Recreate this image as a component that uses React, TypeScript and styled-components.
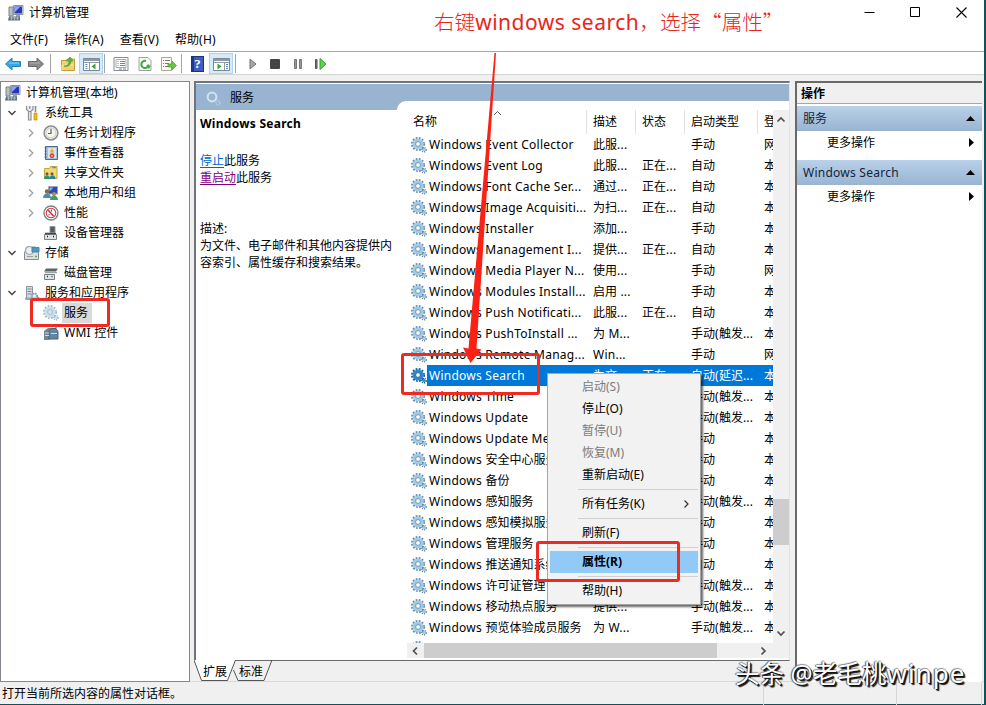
import React from 'react';
import styled, { createGlobalStyle, css } from 'styled-components';

const GlobalStyle = createGlobalStyle`
  * { box-sizing: border-box; }
  body {
    margin: 0;
    background: #fff;
    color: #000;
    font-family: "Noto Sans", "Noto Sans CJK SC", sans-serif;
    font-size: 12px;
    line-height: 20px;
    overflow: hidden;
  }
  svg { display: block; flex: none; }
`;

/* ---------- text ---------- */
const Latin = styled.span`
  letter-spacing: 0.25px;
`;
const T = ({ children }: { children: string }) => (
  <>
    {children.split(/([\x20-\x7e]+)/).map((part, i) =>
      /^[\x20-\x7e]+$/.test(part) ? <Latin key={i}>{part}</Latin> : part,
    )}
  </>
);

/* ---------- window frame ---------- */
const Desktop = styled.div`
  position: relative;
  width: 986px;
  height: 705px;
  overflow: hidden;
  background: #164f5b;
  padding: 0 2px 1px 0;
`;
const Window = styled.div`
  display: flex;
  flex-direction: column;
  height: 704px;
  background: #f0f0f0;
`;
const TitleBar = styled.div`
  display: flex;
  align-items: center;
  height: 28px;
  padding: 0 17px 3px 8px;
  background: #fff;
`;
const TitleText = styled.div`
  flex: 1;
  padding-left: 5px;
`;
const WindowButtons = styled.div`
  display: flex;
  gap: 35px;
`;
const MenuBar = styled.div`
  display: flex;
  gap: 16px;
  height: 24px;
  padding: 2px 0 0 10px;
  background: #fff;
  border-bottom: 1px solid #a6a6a6;
`;
const ToolBar = styled.div`
  display: flex;
  align-items: center;
  height: 23px;
  padding: 1px 0 0 1px;
  background: #fff;
  border-bottom: 1px solid #d5d5d5;
`;
const ToolButton = styled.div<{ $active?: boolean; $w?: number }>`
  display: flex;
  align-items: center;
  justify-content: center;
  width: ${(p) => p.$w ?? 23}px;
  height: 21px;
  ${(p) =>
    p.$active &&
    css`
      background: #d5eafb;
      border: 1px solid #a9d5f7;
    `}
`;
const ToolDivider = styled.div<{ $l?: number; $r?: number }>`
  width: 1px;
  height: 19px;
  margin: 0 ${(p) => p.$r ?? 2}px 0 ${(p) => p.$l ?? 2}px;
  background: #a0a5ac;
`;

const Workspace = styled.div`
  display: grid;
  grid-template-columns: 190px 596px 188px;
  column-gap: 4px;
  height: 607px;
  padding-top: 6px;
  border-bottom: 1px solid #d9d9d9;
`;

/* ---------- tree ---------- */
const TreePane = styled.div`
  height: 601px;
  padding-top: 1px;
  background: #fff;
  border: 1px solid #828790;
`;
const TreeRow = styled.div<{ $level: number }>`
  display: flex;
  align-items: center;
  height: 20px;
  padding-left: ${(p) => [4, 6, 26][p.$level]}px;
`;
const Chevron = styled.div<{ $level: number }>`
  width: ${(p) => [0, 17, 16][p.$level]}px;
`;
const TreeLabel = styled.div<{ $selected?: boolean }>`
  height: 20px;
  margin-left: 3px;
  padding: 0 2px;
  white-space: nowrap;
  ${(p) =>
    p.$selected &&
    css`
      padding-right: 4px;
      background: #d9d9d9;
    `}
`;

/* ---------- centre ---------- */
const CentrePane = styled.div`
  display: flex;
  flex-direction: column;
  height: 601px;
`;
const CentreBody = styled.div`
  height: 580px;
  padding-top: 1px;
  background: #fff;
  border: 1px solid #70747b;
  border-left-width: 2px;
  border-top-width: 2px;
  border-right-color: #e3e3e3;
  border-bottom-color: #696969;
`;
const CentreHeader = styled.div`
  display: flex;
  align-items: center;
  height: 26px;
  padding: 1px 0 0 9px;
  gap: 9px;
  background: #99b4d1;
`;
const CentreSplit = styled.div`
  display: flex;
  height: 550px;
`;
const Detail = styled.div`
  width: 201px;
  padding: 4px 0 0 4px;
  line-height: 17px;
`;
const ServiceName = styled.div`
  font-weight: 700;
  font-size: 12px;
  line-height: 20px;
  letter-spacing: 0.27px;
  margin-bottom: 18px;
`;
const ActionLink = styled.span<{ $visited?: boolean }>`
  color: ${(p) => (p.$visited ? '#800080' : '#0066cc')};
  text-decoration: underline;
  text-underline-offset: 2px;
`;
const Description = styled.div`
  margin-top: 34px;
`;
const ListPane = styled.div`
  width: 392px;
  height: 559px;
  margin-top: -9px;
  padding: 9px 0 0 10px;
  background: #fff;
  border-top-left-radius: 9px;
`;
const ListGrid = styled.div`
  display: grid;
  grid-template-columns: 366px 16px;
  grid-template-rows: 533px 15px;
`;
const ListView = styled.div`
  overflow: hidden;
`;
const columns = css`
  display: grid;
  grid-template-columns: 180px 49px 49px 73px 15px;
`;
const HeaderRow = styled.div`
  ${columns}
  height: 24px;
  line-height: 24px;
`;
const HeaderCell = styled.div`
  position: relative;
  padding-left: 6px;
  border-right: 1px solid #e2e2e2;
  overflow: hidden;
  white-space: nowrap;
  &:last-child { border-right: 0; }
`;
const SortMark = styled.div`
  position: absolute;
  left: 86px;
  top: 0;
`;
const ServiceRow = styled.div<{ $selected?: boolean }>`
  ${columns}
  height: 21px;
  line-height: 21px;
  ${(p) =>
    p.$selected &&
    css`
      color: #fff;
      background: linear-gradient(#0078d7, #0078d7) 20px 0 no-repeat;
    `}
`;
const NameCell = styled.div`
  display: flex;
  align-items: center;
  gap: 2px;
  padding-left: 4px;
  white-space: nowrap;
`;
const Cell = styled.div`
  padding-left: 6px;
  overflow: hidden;
  white-space: nowrap;
`;
const VScroll = styled.div`
  display: flex;
  flex-direction: column;
  align-items: center;
  background: #f0f0f0;
  padding: 6px 0;
`;
const VThumb = styled.div`
  width: 16px;
  height: 46px;
  margin: 376px 0 85px;
  background: #cdcdcd;
`;
const HScroll = styled.div`
  display: flex;
  align-items: center;
  background: #f0f0f0;
  padding: 0 6px 0 5px;
`;
const HThumb = styled.div`
  width: 293px;
  height: 15px;
  margin: 0 43px 0 5px;
  background: #cdcdcd;
`;
const Corner = styled.div`
  background: #f0f0f0;
`;
const TabStrip = styled.div`
  display: flex;
  height: 21px;
`;
const Tab = styled.div<{ $w: number; $first?: boolean }>`
  display: grid;
  width: ${(p) => p.$w}px;
  height: 21px;
  margin-top: -1px;
  margin-left: ${(p) => (p.$first ? 0 : -5)}px;
  & > * { grid-area: 1 / 1; }
`;
const TabLabel = styled.div<{ $l: number }>`
  padding-left: ${(p) => p.$l}px;
  line-height: 23px;
  height: 21px;
`;

/* ---------- actions ---------- */
const ActionsPane = styled.div`
  margin-left: 1px;
  height: 601px;
  background: #fff;
  border-left: 2px solid #696969;
  border-top: 2px solid #696969;
`;
const ActionsTitle = styled.div`
  height: 21px;
  margin-bottom: 2px;
  padding-left: 4px;
  font-weight: 700;
  line-height: 21px;
  background: #f0f0f0;
  border-bottom: 1px solid #a0aab6;
`;
const ActionGroup = styled.div`
  display: flex;
  align-items: center;
  justify-content: space-between;
  height: 25px;
  padding: 0 7px 0 6px;
  color: #10243e;
  background: linear-gradient(#b9d1ea, #99b4d1);
`;
const ActionItem = styled.div`
  display: flex;
  align-items: center;
  justify-content: space-between;
  height: 23px;
  margin-bottom: 6px;
  padding: 0 8px 0 30px;
`;

const StatusBar = styled.div`
  display: grid;
  grid-template-columns: 764px 133px 85px;
  height: 22px;
  line-height: 23px;
`;
const StatusCell = styled.div`
  padding-left: 2px;
  border-right: 1px solid #d7d7d7;
`;

/* ---------- context menu ---------- */
const ContextMenu = styled.div`
  position: absolute;
  left: 547px;
  top: 373px;
  width: 154px;
  height: 232px;
  padding: 2px;
  background: #f2f2f2;
  border: 1px solid #a6a6a6;
  box-shadow: 2px 2px 2px rgba(0, 0, 0, 0.6);
`;
const MenuItem = styled.div<{ $disabled?: boolean; $hot?: boolean }>`
  display: flex;
  align-items: center;
  justify-content: space-between;
  height: 22px;
  padding: 0 8px 0 32px;
  color: ${(p) => (p.$disabled ? '#7b7b7b' : '#000')};
  ${(p) =>
    p.$hot &&
    css`
      font-weight: 700;
      background: #91c9f7;
    `}
`;
const MenuLine = styled.div`
  height: 1px;
  margin: 3px 0 3px 28px;
  background: #d0d0d0;
`;

/* ---------- annotations ---------- */
const Note = styled.div`
  position: absolute;
  left: 434px;
  top: 6px;
  color: #e8251c;
  font-family: "Noto Sans CJK SC", sans-serif;
  font-size: 20.6px;
  font-weight: 300;
  line-height: 30px;
  white-space: nowrap;
`;
const NoteLatin = styled.span`
  font-family: "Noto Sans", sans-serif;
  font-weight: 400;
  font-size: 21px;
  letter-spacing: 0.5px;
`;
const MarkBox = styled.div<{ $x: number; $y: number; $w: number; $h: number }>`
  position: absolute;
  left: ${(p) => p.$x}px;
  top: ${(p) => p.$y}px;
  width: ${(p) => p.$w}px;
  height: ${(p) => p.$h}px;
  border: 3px solid #ee2b22;
  border-radius: 3px;
`;
const ArrowLayer = styled.svg`
  position: absolute;
  left: 455px;
  top: 50px;
`;
const Watermark = styled.div`
  position: absolute;
  left: 735px;
  top: 656px;
  color: #fff;
  font-size: 24.6px;
  line-height: 34px;
  white-space: nowrap;
  text-shadow: 1px 1px 0 #111, 2px 2px 1px #111, -1px 0 1px #555, 0 -1px 1px #999;
`;
const WatermarkLatin = styled.span`
  font-size: 26px;
  letter-spacing: 1px;
`;

/* ---------- icons ---------- */
const Icon = ({ children, w = 16, h = 16 }: { children: React.ReactNode; w?: number; h?: number }) => (
  <svg width={w} height={h} viewBox={`0 0 ${w} ${h}`} fill="none">{children}</svg>
);
const Gear = ({ kind = 'normal' }: { kind?: 'normal' | 'selected' | 'pale' | 'header' }) => {
  const [rim, body, hole] = {
    normal: ['#6488a5', '#9fcbe8', '#fff'],
    selected: ['#075c9e', '#2f86cc', '#fff'],
    pale: ['#9fb6c8', '#c6deed', '#e3e3e3'],
    header: ['#b4cfe2', '#cfe5f2', '#99b4d1'],
  }[kind];
  return (
    <Icon>
      {kind !== 'header' && <circle cx="7" cy="7" r="6.1" stroke={rim} strokeWidth="1.8" strokeDasharray="1.8 1.4" />}
      <circle cx="7" cy="7" r={kind === 'header' ? 4.4 : 4} fill={hole} stroke={body} strokeWidth={kind === 'header' ? 2 : 3} />
      {kind !== 'header' && <circle cx="7" cy="7" r="2.4" stroke={rim} strokeWidth=".9" />}
      <circle cx="13" cy="12.7" r="2" stroke={rim} strokeWidth="1.8" strokeDasharray="1 .8" />
      {kind !== 'header' && <circle cx="13" cy="12.7" r="1.2" fill={body} />}
    </Icon>
  );
};
const Computer = () => (
  <Icon>
    <path d="M1 2h4v9H1z" fill="#b8bfc5" stroke="#7b858c" />
    <path d="M5.5 .5h9.500v9h-9.500z" fill="#d9dfe5" stroke="#8c969e" />
    <path d="M6.5 1.500h7.500v7h-7.500z" fill="#2736bd" />
    <path d="M7 2h5L7 7z" fill="#8fa5f0" />
    <path d="M8 10h4v2H8z" fill="#9aa3aa" />
    <path d="M1 11.5h11v4H0z" fill="#5b6f7d" />
    <path d="M2 13h9M3.5 11.5v4M6.5 11.5v4M9.5 11.5v4" stroke="#b9c8d1" strokeWidth=".8" />
  </Icon>
);
const icons: Record<string, React.ReactNode> = {
  computer: <Computer />,
  tools: (
    <Icon>
      <path d="M4.500 6v9h2.500V6M2.500 1v3.500L4.500 6.500H7L9 4.500V1M5.700 1v3" stroke="#8d9296" strokeWidth="1.200" fill="#e9ebec" />
      <path d="M11.500 1v6" stroke="#8c8c8c" strokeWidth="1.600" />
      <path d="M10 8h3v7h-3z" fill="#f2bf1b" stroke="#b98a14" strokeWidth=".7" />
    </Icon>
  ),
  clock: (
    <Icon>
      <circle cx="8" cy="8" r="6.900" fill="#eef1f2" stroke="#8a8e90" strokeWidth="1.500" />
      <circle cx="8" cy="8" r="4.900" fill="#f9f6e5" stroke="#c6cccf" />
      <path d="M8 4v4.500H5" stroke="#4c6275" strokeWidth="1.200" />
    </Icon>
  ),
  events: (
    <Icon>
      <path d="M2.500 1.500h12v13h-12z" fill="#a5bfe0" stroke="#53668d" />
      <path d="M5 3h8v10H5z" fill="#d9e4f2" />
      <path d="M1.500 3h2M1.500 6h2M1.500 9h2M1.500 12h2" stroke="#4b5f85" />
      <path d="M9 3l2.500 4.500h-5z" fill="#e9b918" />
      <circle cx="9" cy="10.700" r="2.400" fill="#d3322b" />
      <path d="M8 9.700l2 2m0-2l-2 2" stroke="#fff" strokeWidth=".7" />
    </Icon>
  ),
  share: (
    <Icon>
      <path d="M1.500 3.500h5l1-2h6.500v12H1.500z" fill="#f3d978" stroke="#c7a33b" />
      <path d="M9 2.500h4" stroke="#46a0dc" strokeWidth="1.500" />
      <circle cx="4" cy="8.800" r="1.500" fill="#7a5734" />
      <circle cx="9" cy="8.800" r="1.500" fill="#7a5734" />
      <path d="M1 14c0-5 6-5 6 0z" fill="#2b9a62" />
      <path d="M6.500 14c0-5 6-5 6 0z" fill="#2f7dab" />
    </Icon>
  ),
  users: (
    <Icon>
      <path d="M5.500 1.500h9v7.500h-9z" fill="#2c48bd" stroke="#9ca8b2" />
      <path d="M6.500 2.500h4l-4 4z" fill="#92b1ef" />
      <circle cx="4" cy="6.500" r="2.200" fill="#8c6848" />
      <path d="M0 13c0-6 8-6 8 0z" fill="#4d8bb4" />
      <circle cx="11" cy="9" r="2" fill="#b38b55" />
      <path d="M7 15c0-6 8-6 8 0z" fill="#479c66" />
    </Icon>
  ),
  perf: (
    <Icon>
      <circle cx="8" cy="8" r="7" fill="#fff" stroke="#7e8181" strokeWidth="1.300" />
      <circle cx="8" cy="8" r="4.800" stroke="#cf3a41" strokeWidth="1.100" />
      <path d="M5 5l5.500 6" stroke="#c92934" strokeWidth="1.500" />
      <path d="M8.500 4.500v2M6 9v1.500" stroke="#c92934" />
    </Icon>
  ),
  device: (
    <Icon>
      <path d="M7 1.500h5v6H7z" fill="#555b5e" stroke="#8f9699" />
      <path d="M1.500 9.500h12v5h-12z" fill="#dfe2e4" stroke="#7b8286" />
      <path d="M2 8.500h11" stroke="#3f474c" strokeWidth="1.500" />
      <path d="M4 11.500h1M10 11.500h1" stroke="#222" strokeWidth="1.500" />
    </Icon>
  ),
  storage: (
    <Icon>
      <path d="M2.500 2h9l3 6v6.500H.500V8z" fill="#dce0e3" stroke="#858c91" />
      <circle cx="5.500" cy="5.500" r="4" fill="#edf0f1" stroke="#969da1" />
      <path d="M8 2.500h7v4.500H8z" fill="#31a2cf" stroke="#5f7e8f" />
      <path d="M3 11.500h6" stroke="#979fa4" />
      <path d="M11 11.500h2" stroke="#46b948" strokeWidth="1.500" />
    </Icon>
  ),
  disk: (
    <Icon>
      <path d="M3 3.500h12l-2 3H1z" fill="#5d6468" />
      <path d="M2 7.500h12" stroke="#9da3a7" strokeWidth="1.500" />
      <path d="M1.500 9.500h10v5h-10z" fill="#e1e4e5" stroke="#767e82" />
      <path d="M4 11.500h1M8.500 11.500h1" stroke="#333" strokeWidth="1.500" />
    </Icon>
  ),
  apps: (
    <Icon>
      <path d="M2.500 1.500h6v13h-6z" fill="#d6dce0" stroke="#8e979d" />
      <path d="M3.500 4h4M3.500 6.500h4M3.500 9h4" stroke="#7d8990" />
      <path d="M1 12.500h7v2H1z" fill="#9aa6ae" />
      <circle cx="10.500" cy="11" r="2.600" stroke="#6ea5c9" strokeWidth="2" strokeDasharray="1.400 .7" fill="#e6f3fa" />
      <circle cx="14" cy="13.500" r="1.400" stroke="#7597ac" />
    </Icon>
  ),
  gear: <Gear kind="pale" />,
  wmi: (
    <Icon>
      <path d="M1 6l4-3h6v5L6 15H1z" fill="#74838d" />
      <path d="M8 3.500h5l2 3V14H6V6z" fill="#5d87a5" stroke="#4d6372" />
      <path d="M2 8h4M2 10.500h4M8 8.500h6" stroke="#c9dae5" />
      <path d="M10 1.500h3v2" stroke="#404b52" />
    </Icon>
  ),
};
const ChevronDown = () => (
  <Icon w={10} h={8}><path d="M1.500 2l3.500 3.500L8.500 2" stroke="#404040" strokeWidth="1.400" /></Icon>
);
const ChevronRight = () => (
  <Icon w={8} h={10}><path d="M2 1.200L5.800 5 2 8.800" stroke="#a0a0a0" strokeWidth="1.300" /></Icon>
);
const NavArrow = ({ forward }: { forward?: boolean }) => (
  <Icon w={18}>
    <path
      d={forward ? 'M16.500 8L10 2v3.500H1.500v5H10V14z' : 'M1.500 8L8 2v3.500h8.500v5H8V14z'}
      fill={forward ? '#8b8b8b' : '#34a8e0'}
      stroke={forward ? '#696969' : '#2581b5'}
    />
    <path d={forward ? 'M3 7h10' : 'M5 7h10'} stroke={forward ? '#b2b2b2' : '#8bd5f6'} />
  </Icon>
);
const PanelIcon = ({ right }: { right?: boolean }) => (
  <Icon w={17}>
    <path d="M.500 2.500h16v12H.500z" fill="#fff" stroke="#7f8791" />
    <path d="M1 4h15" stroke="#8f98a5" strokeWidth="2" />
    <path d={right ? 'M11.500 6v8M1 6.500h15' : 'M6.500 6v8M1 6.500h15'} stroke="#8f98a5" />
    <path d={right ? 'M13 8.500h2M13 10.500h2M13 12.500h2' : 'M2.500 8.500h2M2.500 10.500h2M2.500 12.500h2'} stroke="#6489bb" />
    <path d={right ? 'M4.500 7.500v6L8.500 10.500z' : 'M12.500 7.500v6L8.500 10.500z'} fill="#35a636" />
  </Icon>
);
const FolderUp = () => (
  <Icon>
    <path d="M1.500 4.500h5l1-1.500h7v11.500h-13z" fill="#f2cf72" stroke="#c69b3c" />
    <path d="M2 14.500V9h12" stroke="#fae7a8" />
    <path d="M4 10c4 0 5-2 5-5H6.500L10 1l3 4h-2c0 4-3 6-7 5z" fill="#57b63c" stroke="#39932b" strokeWidth=".6" />
  </Icon>
);
const PropsIcon = () => (
  <Icon>
    <path d="M1 1.500h14v13H1z" fill="#fff" stroke="#868c93" />
    <path d="M3 3.500h10v8H3z" stroke="#a7adb4" />
    <path d="M4.500 5.500h1M4.500 7.500h1M4.500 9.500h1M7 5.500h5M7 7.500h5M7 9.500h5M6 13h3M10 13h3" stroke="#7386a3" />
  </Icon>
);
const RefreshIcon = () => (
  <Icon>
    <path d="M2 1.500h9l3 3v10H2z" fill="#f8f8f8" stroke="#a2a2a2" />
    <path d="M11.500 8.500A3.600 3.600 0 1 1 9 5" stroke="#3fa93b" strokeWidth="2" />
    <path d="M9 9.500h5l-2 3.500z" fill="#3fa93b" />
  </Icon>
);
const ExportIcon = () => (
  <Icon>
    <path d="M.500 1.500h10v13H.500z" fill="#fdf9ed" stroke="#b0a98f" />
    <path d="M2 4.500h1M2 7.500h1M2 10.500h1M4 4.500h5M4 7.500h4M4 10.500h4" stroke="#6f7684" />
    <path d="M7 8h4V5l4.500 4.500L11 14v-3H7z" fill="#6cc348" stroke="#4a9e2e" strokeWidth=".7" />
  </Icon>
);
const HelpBox = styled.div`
  width: 13px;
  height: 16px;
  background: linear-gradient(90deg, #23378f 2px, #3f5fc0 2px);
  border: 1px solid #20317e;
  color: #fff;
  font: 700 13px/14px "Liberation Serif", serif;
  text-align: center;
`;

/* ---------- data ---------- */
type Node = [level: number, open: '' | 'open' | 'closed', icon: string, label: string];
const tree: Node[] = [
  [0, '', 'computer', '计算机管理(本地)'],
  [1, 'open', 'tools', '系统工具'],
  [2, 'closed', 'clock', '任务计划程序'],
  [2, 'closed', 'events', '事件查看器'],
  [2, 'closed', 'share', '共享文件夹'],
  [2, 'closed', 'users', '本地用户和组'],
  [2, 'closed', 'perf', '性能'],
  [2, '', 'device', '设备管理器'],
  [1, 'open', 'storage', '存储'],
  [2, '', 'disk', '磁盘管理'],
  [1, 'open', 'apps', '服务和应用程序'],
  [2, '', 'gear', '服务'],
  [2, '', 'wmi', 'WMI 控件'],
];
const services = [
  ['Event Collector', '此服...', '', '手动', '网'],
  ['Event Log', '此服...', '正在...', '自动', '本'],
  ['Font Cache Ser...', '通过...', '正在...', '自动', '本'],
  ['Image Acquisiti...', '为扫...', '正在...', '自动', '本'],
  ['Installer', '添加...', '', '手动', '本'],
  ['Management I...', '提供...', '正在...', '自动', '本'],
  ['Media Player N...', '使用...', '', '手动', '网'],
  ['Modules Install...', '启用 ...', '', '手动', '本'],
  ['Push Notificati...', '此服...', '正在...', '自动', '本'],
  ['PushToInstall ...', '为 M...', '', '手动(触发...', '本'],
  ['Remote Manag...', 'Win...', '', '手动', '网'],
  ['Search', '为文...', '正在...', '自动(延迟...', '本'],
  ['Time', '', '', '手动(触发...', '本'],
  ['Update', '', '', '手动(触发...', '本'],
  ['Update Me...', '', '', '手动', '本'],
  ['安全中心服务', '', '', '手动', '本'],
  ['备份', '', '', '手动', '本'],
  ['感知服务', '', '', '手动(触发...', '本'],
  ['感知模拟服务', '', '', '手动', '本'],
  ['管理服务', '', '', '手动', '本'],
  ['推送通知系统', '', '', '自动', '本'],
  ['许可证管理', '', '', '手动(触发...', '本'],
  ['移动热点服务', '提供...', '', '手动(触发...', '本'],
  ['预览体验成员服务', '为 W...', '', '手动(触发...', '本'],
];

const ActionSection = ({ title }: { title: string }) => (
  <>
    <ActionGroup>
      <T>{title}</T>
      <Icon w={9} h={5}><path d="M0 5l4.500-5L9 5z" fill="#000" /></Icon>
    </ActionGroup>
    <ActionItem>
      更多操作
      <Icon w={5} h={9}><path d="M0 0l5 4.500L0 9z" fill="#000" /></Icon>
    </ActionItem>
  </>
);

export default function App() {
  return (
    <Desktop>
      <GlobalStyle />
      <Window>
        <TitleBar>
          <Computer />
          <TitleText>计算机管理</TitleText>
          <WindowButtons>
            <Icon w={11} h={11}><path d="M.500 5.500h10" stroke="#000" /></Icon>
            <Icon w={11} h={11}><path d="M.500.500h9v9h-9z" stroke="#000" /></Icon>
            <Icon w={11} h={11}><path d="M.500.500l10 10m0-10l-10 10" stroke="#000" strokeWidth="1.100" /></Icon>
          </WindowButtons>
        </TitleBar>
        <MenuBar>
          {['文件(F)', '操作(A)', '查看(V)', '帮助(H)'].map((m) => (
            <div key={m}><T>{m}</T></div>
          ))}
        </MenuBar>
        <ToolBar>
          <ToolButton><NavArrow /></ToolButton>
          <ToolButton><NavArrow forward /></ToolButton>
          <ToolDivider $l={3} $r={5} />
          <ToolButton><FolderUp /></ToolButton>
          <ToolButton $active $w={24}><PanelIcon /></ToolButton>
          <ToolDivider $l={1} $r={4} />
          <ToolButton><PropsIcon /></ToolButton>
          <ToolButton $w={25}><RefreshIcon /></ToolButton>
          <ToolButton><ExportIcon /></ToolButton>
          <ToolDivider $l={1} $r={4} />
          <ToolButton><HelpBox>?</HelpBox></ToolButton>
          <ToolButton $active $w={24}><PanelIcon right /></ToolButton>
          <ToolDivider $l={2} $r={5} />
          <ToolButton>
            <Icon><path d="M5 3v10l6-5z" fill="#a8a8a8" stroke="#717171" /></Icon>
          </ToolButton>
          <ToolButton $w={22}>
            <Icon><rect x="3" y="3" width="10" height="10" rx="1" fill="#454545" /></Icon>
          </ToolButton>
          <ToolButton>
            <Icon><path d="M4.500 3.500h2v9h-2zM9.500 3.500h2v9h-2z" fill="#999" stroke="#777" /></Icon>
          </ToolButton>
          <ToolButton>
            <Icon>
              <path d="M2.500 3.500h1.500v9H2.500z" fill="#777" stroke="#555" />
              <path d="M7 2.500v11l6-5.500z" fill="#5ed54b" stroke="#2ea52b" />
            </Icon>
          </ToolButton>
        </ToolBar>

        <Workspace>
          <TreePane>
            {tree.map(([level, open, icon, label]) => (
              <TreeRow key={label} $level={level}>
                <Chevron $level={level}>
                  {open === 'open' && <ChevronDown />}
                  {open === 'closed' && <ChevronRight />}
                </Chevron>
                {icons[icon]}
                <TreeLabel $selected={icon === 'gear'}><T>{label}</T></TreeLabel>
              </TreeRow>
            ))}
          </TreePane>

          <CentrePane>
            <CentreBody>
              <CentreHeader>
                <Gear kind="header" />
                服务
              </CentreHeader>
              <CentreSplit>
                <Detail>
                  <ServiceName>Windows Search</ServiceName>
                  <div><ActionLink>停止</ActionLink>此服务</div>
                  <div><ActionLink $visited>重启动</ActionLink>此服务</div>
                  <Description>
                    描述:
                    <br />
                    为文件、电子邮件和其他内容提供内
                    <br />
                    容索引、属性缓存和搜索结果。
                  </Description>
                </Detail>
                <ListPane>
                  <ListGrid>
                    <ListView>
                      <HeaderRow>
                        <HeaderCell>
                          名称
                          <SortMark>
                            <Icon w={9} h={6}><path d="M1 5l3.500-3.500L8 5" stroke="#555" /></Icon>
                          </SortMark>
                        </HeaderCell>
                        <HeaderCell>描述</HeaderCell>
                        <HeaderCell>状态</HeaderCell>
                        <HeaderCell>启动类型</HeaderCell>
                        <HeaderCell>登</HeaderCell>
                      </HeaderRow>
                      {services.map(([name, desc, state, start, logon]) => (
                        <ServiceRow key={name} $selected={name === 'Search'}>
                          <NameCell>
                            <Gear kind={name === 'Search' ? 'selected' : 'normal'} />
                            <span><T>{`Windows ${name}`}</T></span>
                          </NameCell>
                          <Cell><T>{desc}</T></Cell>
                          <Cell><T>{state}</T></Cell>
                          <Cell><T>{start}</T></Cell>
                          <Cell>{logon}</Cell>
                        </ServiceRow>
                      ))}
                      <ServiceRow><NameCell><Gear /></NameCell></ServiceRow>
                    </ListView>
                    <VScroll>
                      <Icon w={10} h={7}><path d="M1.500 5.500L5 2l3.500 3.500" stroke="#505050" strokeWidth="1.700" /></Icon>
                      <VThumb />
                      <Icon w={10} h={7}><path d="M1.500 1.500L5 5l3.500-3.500" stroke="#505050" strokeWidth="1.700" /></Icon>
                    </VScroll>
                    <HScroll>
                      <Icon w={7} h={10}><path d="M5 1.500L1.500 5 5 8.500" stroke="#505050" strokeWidth="1.700" /></Icon>
                      <HThumb />
                      <Icon w={7} h={10}><path d="M1.500 1.500L5 5 1.500 8.500" stroke="#505050" strokeWidth="1.700" /></Icon>
                    </HScroll>
                    <Corner />
                  </ListGrid>
                </ListPane>
              </CentreSplit>
            </CentreBody>
            <TabStrip>
              <Tab $w={43} $first>
                <Icon w={43} h={21}><path d="M0 0l7.500 20.500h26L41.500 0z" fill="#fff" /><path d="M0 0l7.500 20.500h26L41.500 0" stroke="#555" /></Icon>
                <TabLabel $l={9}>扩展</TabLabel>
              </Tab>
              <Tab $w={42}>
                <Icon w={42} h={21}><path d="M1.500 10l4.500 10.500h26L40 0" stroke="#555" /></Icon>
                <TabLabel $l={7}>标准</TabLabel>
              </Tab>
            </TabStrip>
          </CentrePane>

          <ActionsPane>
            <ActionsTitle>操作</ActionsTitle>
            <ActionSection title="服务" />
            <ActionSection title="Windows Search" />
          </ActionsPane>
        </Workspace>
        <StatusBar>
          <StatusCell>打开当前所选内容的属性对话框。</StatusCell>
          <StatusCell />
          <StatusCell />
        </StatusBar>
      </Window>

      <ContextMenu>
        <MenuItem $disabled>启动(S)</MenuItem>
        <MenuItem>停止(O)</MenuItem>
        <MenuItem $disabled>暂停(U)</MenuItem>
        <MenuItem $disabled>恢复(M)</MenuItem>
        <MenuItem>重新启动(E)</MenuItem>
        <MenuLine />
        <MenuItem>
          所有任务(K)
          <Icon w={7} h={10}><path d="M1.500 1.500L5 5 1.500 8.500" stroke="#333" strokeWidth="1.200" /></Icon>
        </MenuItem>
        <MenuLine />
        <MenuItem>刷新(F)</MenuItem>
        <MenuLine />
        <MenuItem $hot>属性(R)</MenuItem>
        <MenuLine />
        <MenuItem>帮助(H)</MenuItem>
      </ContextMenu>

      <MarkBox $x={30} $y={298} $w={80} $h={29} />
      <MarkBox $x={401} $y={353} $w={139} $h={42} />
      <MarkBox $x={536} $y={541} $w={144} $h={41} />
      <ArrowLayer width="50" height="320" viewBox="0 0 50 320">
        <path d="M39.500 3h1.500L21.500 298.500l5 1L15.500 313 8 297.500l5.500 1z" fill="#fb2115" />
      </ArrowLayer>
      <Note lang="zh-CN">右键<NoteLatin>windows search</NoteLatin>，选择“属性”</Note>
      <Watermark>头条 @老毛桃<WatermarkLatin>winpe</WatermarkLatin></Watermark>
    </Desktop>
  );
}
